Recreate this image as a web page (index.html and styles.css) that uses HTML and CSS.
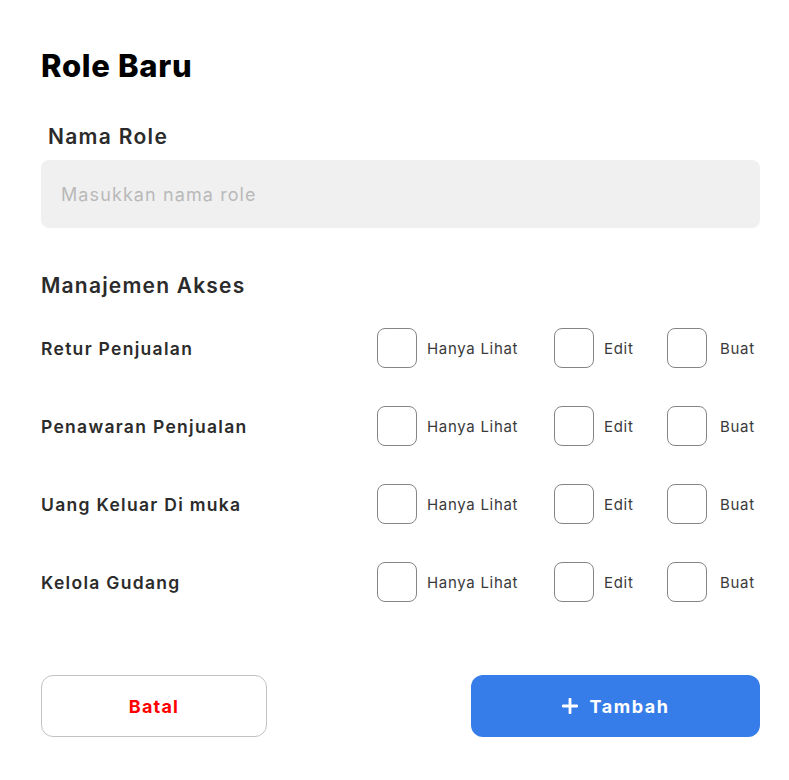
FILE: index.html
```html
<!DOCTYPE html>
<html lang="id">
<head>
<meta charset="utf-8">
<title>Role Baru</title>
<link rel="stylesheet" href="styles.css">
</head>
<body>
<main class="page">
  <h1 class="title">Role Baru</h1>
  <label class="field-label" for="role">Nama Role</label>
  <input class="text-input" id="role" type="text" placeholder="Masukkan nama role">

  <h2 class="section-title">Manajemen Akses</h2>

  <div class="access-list">
    <div class="access-row">
      <span class="access-name">Retur Penjualan</span>
      <label class="opt"><span class="box"></span><span class="opt-text">Hanya Lihat</span></label>
      <label class="opt"><span class="box"></span><span class="opt-text">Edit</span></label>
      <label class="opt"><span class="box"></span><span class="opt-text buat">Buat</span></label>
    </div>
    <div class="access-row">
      <span class="access-name">Penawaran Penjualan</span>
      <label class="opt"><span class="box"></span><span class="opt-text">Hanya Lihat</span></label>
      <label class="opt"><span class="box"></span><span class="opt-text">Edit</span></label>
      <label class="opt"><span class="box"></span><span class="opt-text buat">Buat</span></label>
    </div>
    <div class="access-row">
      <span class="access-name">Uang Keluar Di muka</span>
      <label class="opt"><span class="box"></span><span class="opt-text">Hanya Lihat</span></label>
      <label class="opt"><span class="box"></span><span class="opt-text">Edit</span></label>
      <label class="opt"><span class="box"></span><span class="opt-text buat">Buat</span></label>
    </div>
    <div class="access-row">
      <span class="access-name">Kelola Gudang</span>
      <label class="opt"><span class="box"></span><span class="opt-text">Hanya Lihat</span></label>
      <label class="opt"><span class="box"></span><span class="opt-text">Edit</span></label>
      <label class="opt"><span class="box"></span><span class="opt-text buat">Buat</span></label>
    </div>
  </div>

  <div class="actions">
    <button class="btn btn-cancel" type="button">Batal</button>
    <button class="btn btn-add" type="button">
      <svg class="plus" width="16" height="16" viewBox="0 0 16 16" aria-hidden="true"><path d="M8 1v14M1 8h14" stroke="#fff" stroke-width="2.8" stroke-linecap="round"/></svg>
      <span>Tambah</span>
    </button>
  </div>
</main>
</body>
</html>
```

FILE: styles.css
```css
* { box-sizing: border-box; }
html, body { margin: 0; background: #fff; }
body { font-family: "Inter", "Open Sans", "Liberation Sans", sans-serif; color: #2d2d2d; }

.page {
  width: 719px;
  margin-left: 41px;
  padding-top: 46px;
  display: flex;
  flex-direction: column;
}

.title {
  margin: 0;
  font-size: 31px;
  line-height: 40px;
  font-weight: 800;
  color: #000;
  letter-spacing: 0.7px;
}

.field-label {
  margin: 37px 0 0 7px;
  font-size: 21px;
  line-height: 28px;
  font-weight: 600;
  color: #2b2b2b;
  letter-spacing: 1.3px;
}

.text-input {
  margin-top: 9px;
  height: 68px;
  border: none;
  border-radius: 8px;
  background: #f0f0f0;
  padding: 0 20px;
  font: inherit;
  font-size: 18px;
  letter-spacing: 1.1px;
  color: #333;
  outline: none;
}
.text-input::placeholder { color: #b9b9b9; }

.section-title {
  margin: 44px 0 0;
  font-size: 21px;
  line-height: 28px;
  font-weight: 600;
  color: #2b2b2b;
  letter-spacing: 1.2px;
}

.access-list {
  margin-top: 28px;
  display: flex;
  flex-direction: column;
  gap: 38px;
}

.access-row {
  display: grid;
  grid-template-columns: 336px 177px 113px 1fr;
  align-items: center;
  height: 40px;
}

.access-name {
  font-size: 17.5px;
  font-weight: 600;
  color: #2b2b2b;
  letter-spacing: 1.3px;
}

.opt {
  display: flex;
  align-items: center;
  gap: 10px;
}

.box {
  width: 40px;
  height: 40px;
  border: 1.5px solid #858585;
  border-radius: 8px;
  flex: none;
}

.opt-text {
  font-size: 15px;
  color: #3a3a3a;
  letter-spacing: 0.7px;
}
.opt-text.buat { margin-left: 3px; }

.actions {
  margin-top: 73px;
  display: flex;
  justify-content: space-between;
}

.btn {
  height: 62px;
  border-radius: 12px;
  font: inherit;
  font-size: 18px;
  font-weight: 700;
  display: flex;
  align-items: center;
  justify-content: center;
  cursor: pointer;
}

.btn-cancel {
  width: 226px;
  background: #fff;
  border: 1.5px solid #c2c2c2;
  color: #ff0000;
  letter-spacing: 1.2px;
}

.btn-add {
  width: 289px;
  background: #377de9;
  border: none;
  color: #fff;
  gap: 12px;
  letter-spacing: 1.5px;
}
```
